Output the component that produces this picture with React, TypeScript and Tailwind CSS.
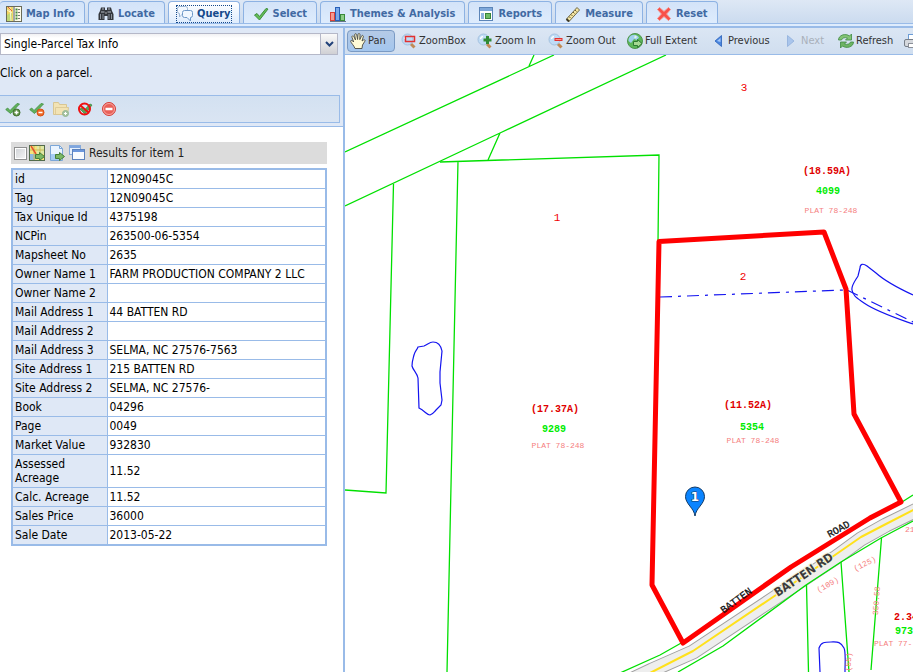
import { useState } from 'react';
import type { ReactNode } from 'react';

const rows = [
  ['id', '12N09045C'],
  ['Tag', '12N09045C'],
  ['Tax Unique Id', '4375198'],
  ['NCPin', '263500-06-5354'],
  ['Mapsheet No', '2635'],
  ['Owner Name 1', 'FARM PRODUCTION COMPANY 2 LLC'],
  ['Owner Name 2', ''],
  ['Mail Address 1', '44 BATTEN RD'],
  ['Mail Address 2', ''],
  ['Mail Address 3', 'SELMA, NC 27576-7563'],
  ['Site Address 1', '215 BATTEN RD'],
  ['Site Address 2', 'SELMA, NC 27576-'],
  ['Book', '04296'],
  ['Page', '0049'],
  ['Market Value', '932830'],
  ['Assessed Acreage', '11.52'],
  ['Calc. Acreage', '11.52'],
  ['Sales Price', '36000'],
  ['Sale Date', '2013-05-22'],
];

const Icon = ({ children }: { children: ReactNode }) => (
  <svg viewBox="0 0 16 16" className="size-4 shrink-0" fill="none" aria-hidden="true">
    {children}
  </svg>
);

const MapInfoIcon = () => (
  <Icon>
    <rect x="0.5" y="0.5" width="15" height="15" fill="#fffbe8" stroke="#6b6b58" />
    <path d="M1 1h6v14H1z" fill="#f3d765" />
    <path d="M1 9l5-3v9H1z" fill="#bfd877" />
    <path d="M1 4l5 3M4 1l1 14" stroke="#fff6c8" />
    <path d="M2 1l4 4" stroke="#e05a3c" />
    <path d="M8 1v14" stroke="#4b5563" />
    <path d="M9.500 3.500h2M9.500 6.500h2M9.500 9.500h2M9.500 12.500h2" stroke="#3f8a3a" strokeWidth="2" />
    <path d="M12 3.500h2M12 6.500h2M12 9.500h2M12 12.500h2" stroke="#777" />
  </Icon>
);

const BinocularsIcon = () => (
  <Icon>
    <path d="M3 1.500h4V4h2V1.500h4L14 5l1.500 3v6H9.500v-4h-3v4H.5V8L2 5z" fill="#33373c" />
    <path d="M4 3h2M10 3h2M3 6h3.500M9.500 6H13" stroke="#b8bec6" />
    <path d="M2.500 8v5M5 8v5M11 8v5M13.500 8v5" stroke="#8b929b" />
    <path d="M7 7h2" stroke="#aaa" />
  </Icon>
);

const ChatIcon = () => (
  <Icon>
    <path d="M2.500.5h6a2 2 0 0 1 2 2v3a2 2 0 0 1-2 2H6l-3.500 3.500V7.500a2 2 0 0 1-2-2v-3a2 2 0 0 1 2-2z" fill="#f2f8ff" stroke="#9fb9d6" />
    <path d="M7.500 4.500h6a2 2 0 0 1 2 2v3a2 2 0 0 1-2 2v3.500L10 11.500H7.500a2 2 0 0 1-2-2v-3a2 2 0 0 1 2-2z" fill="#f0f7ff" stroke="#6d98c8" />
  </Icon>
);

const CheckIcon = () => (
  <Icon>
    <path d="M1.500 9L4 7.500l2.500 3L13 2.500l2 .5-8.500 11z" fill="#63bd57" stroke="#3f8f3c" strokeLinejoin="round" />
  </Icon>
);

const ChartIcon = () => (
  <Icon>
    <rect x="0.500" y="6.500" width="4" height="8" fill="#f59a92" stroke="#dc4238" />
    <rect x="5.500" y="1.500" width="4" height="13" fill="#7ba9ea" stroke="#2860b8" />
    <rect x="10.500" y="8.500" width="4" height="6" fill="#8dcf86" stroke="#3a8a3a" />
    <path d="M0 15.500h16" stroke="#66768b" />
  </Icon>
);

const ReportIcon = () => (
  <Icon>
    <rect x="1.500" y="1.500" width="13" height="13" fill="#fff" stroke="#5c85b8" />
    <path d="M2 3.500h12" stroke="#7fa8da" strokeWidth="3" />
    <rect x="3" y="7" width="3" height="6" fill="#90b4de" />
    <rect x="7.500" y="7.500" width="5" height="5" fill="#6fbd66" stroke="#39853a" />
  </Icon>
);

const RulerIcon = () => (
  <Icon>
    <path d="M1.500 13L12 1.500 14.500 4 4 15.500z" fill="#f5e6a2" stroke="#6e6746" />
    <path d="M4 10.500l1.500 1.500M6 8.500L7.500 10M8 6l1.500 1.500M10 4l1.500 1.500" stroke="#6b5f33" />
    <path d="M1.500 13L4 15.500" stroke="#3c3926" strokeWidth="2" />
  </Icon>
);

const ResetIcon = () => (
  <Icon>
    <path d="M1.500 3.500l2-2L8 5.500l4.500-4 2 2-4 4.500 4 4.500-2 2L8 10.500l-4.500 4-2-2 4-4.500z" fill="#f8514a" stroke="#f58b84" />
  </Icon>
);

const HandIcon = () => (
  <Icon>
    <path
      d="M5 15.500C4 12.500 1 10 .7 8.300.5 7 2.300 7 3.700 9L2 4.300c-.5-1.500 1.300-2 1.900-.6L5.500 7 4.700 2c-.2-1.500 1.700-1.800 2-.3L7.600 6.500 8 1.500c.1-1.400 2-1.300 2 .1l-.2 5L11.500 3c.6-1.200 2.200-.6 1.800.8L12 8l1.500-1c1-.7 2 .2 1.400 1.200L12.500 12l-.5 3.500z"
      fill="#fffbd6"
      stroke="#4c4b3f"
      strokeWidth="0.900"
    />
  </Icon>
);

const Lens = () => (
  <>
    <path d="M9.500 10.500l4 4" stroke="#c08a55" strokeWidth="3" />
    <circle cx="6.500" cy="6.500" r="5.500" fill="#bfdcf6" stroke="#a3c0de" />
    <path d="M3.500 6a3 3 0 0 1 2.500-2.500" stroke="#fff" strokeWidth="1.500" />
  </>
);

const ZoomBoxIcon = () => (
  <Icon>
    <Lens />
    <rect x="4.500" y="3.500" width="9" height="5" stroke="#e23131" strokeWidth="1.500" />
  </Icon>
);

const ZoomInIcon = () => (
  <Icon>
    <Lens />
    <path d="M10.500 3v8M6.500 7h8" stroke="#2f8a35" strokeWidth="3" />
  </Icon>
);

const ZoomOutIcon = () => (
  <Icon>
    <Lens />
    <path d="M6.500 6.500h8" stroke="#e23131" strokeWidth="3" />
    <path d="M7.500 6.500h6" stroke="#ff9a8c" />
  </Icon>
);

const GlobeIcon = () => (
  <Icon>
    <circle cx="8" cy="8" r="7.500" fill="#5db75a" stroke="#4d944d" />
    <path d="M4 2.500c4-2 7 0 8 2L10 7 7 6 4 10 1.500 8C1.300 5.500 2.500 3.500 4 2.500z" fill="#9fd0ee" />
    <path d="M8 2.500l2 1-1 2-2-1z" fill="#e4f5e0" />
    <path d="M6.500 8.500h4v-2l4.500 4-4.500 4v-2h-4z" fill="#a5d993" stroke="#2f7a34" />
  </Icon>
);

const PrevIcon = () => (
  <Icon>
    <path d="M11.500 2.500v11L5 8z" fill="#4a86e0" stroke="#285fb8" strokeWidth="0.800" />
    <path d="M10.500 5v4L7 8z" fill="#a7c9f7" />
  </Icon>
);

const NextIcon = () => (
  <Icon>
    <path d="M4.500 2.500v11L11 8z" fill="#a9c5ec" stroke="#8fafdb" strokeWidth="0.800" />
  </Icon>
);

const RefreshIcon = () => (
  <Icon>
    <path d="M.5 7c0-5 7-7 11-4l2-2v6H7.500l2-2C7 4 4 5 3.500 7z" fill="#83c474" stroke="#3f8a42" strokeWidth="0.800" />
    <path d="M15.500 9c0 5-7 7-11 4l-2 2V9h6l-2 2c2.500 1 5.500 0 6-2z" fill="#6db463" stroke="#3f8a42" strokeWidth="0.800" />
  </Icon>
);

const PrinterIcon = () => (
  <Icon>
    <rect x="4.500" y="1.500" width="8" height="6" fill="#fff" stroke="#6b9cd6" />
    <rect x="0.500" y="6.500" width="15" height="7" rx="1.500" fill="#d5d8dd" stroke="#777e88" />
    <rect x="4.500" y="10.500" width="7" height="4" fill="#fff" stroke="#8a8f98" />
  </Icon>
);

const SmallCheck = () => (
  <path d="M.7 8.500l2-1.500 2.300 2.500 7-7 2.500.5L5.500 12.500z" fill="#63b15b" stroke="#3f8f43" strokeWidth="0.800" />
);

const CheckAddIcon = () => (
  <Icon>
    <SmallCheck />
    <circle cx="11.500" cy="11.500" r="3.500" fill="#5f9149" stroke="#44722f" />
    <path d="M11.500 9.500v4M9.500 11.500h4" stroke="#fff" strokeWidth="1.500" />
  </Icon>
);

const CheckRemoveIcon = () => (
  <Icon>
    <SmallCheck />
    <circle cx="11.500" cy="11.500" r="3.500" fill="#ef6a27" stroke="#d94f12" />
    <path d="M9.500 11.500h4" stroke="#fff" strokeWidth="1.500" />
  </Icon>
);

const FolderAddIcon = () => (
  <Icon>
    <path d="M.5 13.500v-12h5l1 2h7v3h2l-1 7z" fill="#f2e3b4" stroke="#d9c692" />
    <path d="M2.500 13V6.500h12" stroke="#dfcc99" />
    <circle cx="12.500" cy="12.500" r="3" fill="#a6c3a2" stroke="#94b693" />
    <path d="M12.500 11v3M11 12.500h3" stroke="#fff" />
  </Icon>
);

const ClearIcon = () => (
  <Icon>
    <path d="M3 8l2-1 2 2.500L13 3l2 1-7 9z" fill="#5aa855" stroke="#3f8a42" strokeWidth="0.800" />
    <circle cx="7.500" cy="8" r="5.500" stroke="#ee1111" strokeWidth="2" />
    <path d="M3.500 4.500l8 7" stroke="#ee1111" strokeWidth="2" />
  </Icon>
);

const DeleteIcon = () => (
  <Icon>
    <circle cx="8" cy="8" r="6.500" fill="#ea6058" stroke="#d53e38" />
    <circle cx="8" cy="8" r="5.500" stroke="#f6a7a0" />
    <path d="M4.500 8h7" stroke="#fff" strokeWidth="2.500" />
  </Icon>
);

const GoArrow = () => (
  <path d="M6.500 9.500h4v-2l5 4-5 4v-2h-4z" fill="#7cb866" stroke="#447f38" />
);

const ZoomToIcon = () => (
  <Icon>
    <rect x="0.500" y="0.500" width="15" height="15" fill="#f4e37d" stroke="#536b4c" />
    <path d="M8 1h7v8H8z" fill="#dfe8a4" />
    <path d="M1 9h5v6H1z" fill="#8fb7df" />
    <path d="M1 5h14M5 1v14M11 1v14" stroke="#c9bb58" />
    <path d="M2 1l5 8" stroke="#e6502f" strokeWidth="1.500" />
    <GoArrow />
  </Icon>
);

const PageGoIcon = () => (
  <Icon>
    <path d="M1.500.5h9l3 3v12h-12z" fill="#eaf4ff" stroke="#7ba6d8" />
    <path d="M2 9h8v6H2z" fill="#a6ccf3" />
    <path d="M10.500.5v3h3" stroke="#7ba6d8" />
    <GoArrow />
  </Icon>
);

const WindowsIcon = () => (
  <Icon>
    <rect x="0.500" y="0.500" width="11" height="9" fill="#e6f0fc" stroke="#86aadb" />
    <path d="M1 2h10" stroke="#7fa6df" strokeWidth="2" />
    <rect x="3.500" y="4.500" width="12" height="10" fill="#f8fbff" stroke="#5d83bd" />
    <path d="M4 6h11" stroke="#6c97dc" strokeWidth="2" />
  </Icon>
);

const tabs = [
  { label: 'Map Info', icon: <MapInfoIcon />, pad: 'pr-[9px] pl-1.5' },
  { label: 'Locate', icon: <BinocularsIcon />, pad: 'px-[9px]' },
  { label: 'Query', icon: <ChatIcon />, pad: 'px-2' },
  { label: 'Select', icon: <CheckIcon />, pad: 'px-[9px]' },
  { label: 'Themes & Analysis', icon: <ChartIcon />, pad: 'px-[9px]' },
  { label: 'Reports', icon: <ReportIcon />, pad: 'px-[9px]' },
  { label: 'Measure', icon: <RulerIcon />, pad: 'px-[9px]' },
  { label: 'Reset', icon: <ResetIcon />, pad: 'px-[9px]' },
];

const mapTools = [
  { label: 'Pan', icon: <HandIcon />, width: 'w-12' },
  { label: 'ZoomBox', icon: <ZoomBoxIcon />, width: 'w-[73px]' },
  { label: 'Zoom In', icon: <ZoomInIcon />, width: 'w-[68px]' },
  { label: 'Zoom Out', icon: <ZoomOutIcon />, width: 'w-[76px]' },
  { label: 'Full Extent', icon: <GlobeIcon />, width: 'w-[80px]' },
  { label: 'Previous', icon: <PrevIcon />, width: 'w-[70px]' },
  { label: 'Next', icon: <NextIcon />, width: 'w-[52px]' },
  { label: 'Refresh', icon: <RefreshIcon />, width: 'w-[66px]' },
];

const selectionTools = [
  { label: 'Add to selection', icon: <CheckAddIcon /> },
  { label: 'Remove from selection', icon: <CheckRemoveIcon /> },
  { label: 'Add folder', icon: <FolderAddIcon /> },
  { label: 'Clear selection', icon: <ClearIcon /> },
  { label: 'Delete', icon: <DeleteIcon /> },
];

const ParcelMap = () => (
  <svg
    viewBox="345 55 568 617"
    preserveAspectRatio="xMinYMin slice"
    className="block h-full w-full"
    fill="none"
    role="img"
    aria-label="Parcel map"
  >
    {/* road */}
    <g strokeLinejoin="round">
      <path d="M610 690L652 670 693 652 773 599 835 558 861 539 886 525 925 506" stroke="#a0a0a0" strokeWidth="15" />
      <path d="M610 690L652 670 693 652 773 599 835 558 861 539 886 525 925 506" stroke="#eeeeee" strokeWidth="13" />
      <path d="M610 693L652 672 693 651 773 597 835 555 861 537 886 524 925 504" stroke="#ffe11a" strokeWidth="2" />
    </g>

    {/* parcel lines */}
    <g stroke="#00e000" strokeWidth="1.300">
      <path d="M345 152L554 55M529 66l5-11M345 206L500 133 666 55M500 133l-12 27" />
      <path d="M440 162L659 155 658 242M458 161L447 672M393.500 184L386 493 345 490" />
      <path d="M620 673L660 655 683 642M902 502L913 495" />
      <path d="M678 672L723 646 806 585 841 562 881 538 913 521" />
      <path d="M806.500 585L808.500 672M841 562L849 672M881.500 538L871 670" />
    </g>

    {/* water */}
    <g stroke="#1414f0" strokeWidth="1.200">
      <path d="M418 347l6-1c4-2 6-4 9-4 5 0 8 4 9 9l-2 21 0 11 2 17-1 5-5 5c-2 2-3 4-6 5-3 0-5-4-11-7l-1-30c-1-5-5-8-6-12 0-5 1-7 2-11 1-4 3-5 4-8z" />
      <path d="M913 295c-15-7-27-13-37-22l-9-7c-4-3-7-2-7 2l-2 8c-3 5-7 10-6 14 1 6 5 8 12 13 13 9 32 15 49 21" />
      <path d="M820 672l-1-24c2-6 6-6 12-6 6 0 9-1 13 6 2 4 1 14 1 24" />
      <path d="M660 297L845 290" strokeDasharray="12 6 3 6" />
      <path d="M847 290L913 322" strokeDasharray="12 6 3 6" />
    </g>

    <path d="M659 241.500L824 232 846 289 854 414 901 502 870 518 791 567 683 643 652 585z" stroke="#ff0000" strokeWidth="5" strokeLinejoin="round" />

    {/* labels */}
    <g className="font-['Liberation_Mono',monospace]" textAnchor="middle">
      <g fill="#f00000" className="text-[11px]">
        <text x="744" y="91">3</text>
        <text x="557" y="221">1</text>
        <text x="743" y="280">2</text>
      </g>
      <g fill="#e00000" className="text-[10px] font-bold">
        <text x="827" y="174">(18.59A)</text>
        <text x="555" y="412">(17.37A)</text>
        <text x="748" y="408">(11.52A)</text>
        <text x="894" y="620" textAnchor="start">2.34</text>
      </g>
      <g fill="#00ec00" className="text-[10px] font-bold">
        <text x="828" y="194">4099</text>
        <text x="554" y="432">9289</text>
        <text x="752" y="430">5354</text>
        <text x="895" y="634" textAnchor="start">9735</text>
      </g>
      <g fill="#f58080" className="text-[8px]">
        <text x="831" y="213">PLAT 78-248</text>
        <text x="558" y="448">PLAT 78-248</text>
        <text x="753" y="443">PLAT 78-248</text>
        <text x="874" y="646" textAnchor="start">PLAT 77-</text>
        <text x="905" y="532" textAnchor="start">21</text>
      </g>
      <g fill="#f58080" className="text-[8px]">
        <text transform="translate(829 587) rotate(-30)">(109)</text>
        <text transform="translate(866 566) rotate(-27)">(125)</text>
        <text transform="translate(879 601) rotate(-86)">350.58</text>
        <text transform="translate(851 662) rotate(-88)">(55)</text>
      </g>
      <g fill="#111111" className="text-[10px]" stroke="#111111" strokeWidth="0.300">
        <text transform="translate(738 603) rotate(-36)">BATTEN</text>
        <text transform="translate(840 532) rotate(-29)">ROAD</text>
      </g>
    </g>
    <text
      transform="translate(806 578) rotate(-34)"
      textAnchor="middle"
      className="font-['DejaVu_Sans_Condensed',sans-serif] text-[12px] font-bold"
      fill="#3c3c3c"
      stroke="#f4f2dc"
      strokeWidth="2"
      paintOrder="stroke"
    >
      BATTEN RD
    </text>

    {/* marker */}
    <path d="M695 516c-1-8-9.500-12-9.500-19.500a9.500 9.500 0 0 1 19 0C704.500 504 696 508 695 516z" fill="#0a84ff" stroke="#123a66" />
    <text x="695" y="501" textAnchor="middle" className="font-['DejaVu_Sans',sans-serif] text-[12px] font-bold" fill="#ffffff" stroke="#143a66" strokeWidth="1" paintOrder="stroke">
      1
    </text>
  </svg>
);

export default function App() {
  const [activeTab, setActiveTab] = useState('Query');
  const [tool, setTool] = useState('Pan');

  return (
    <div className="flex h-screen flex-col overflow-hidden bg-[#dfe8f6] font-['DejaVu_Sans_Condensed','Noto_Sans',sans-serif] text-[12px] leading-[14px] text-black">
      <nav className="flex shrink-0 items-end gap-[3px] overflow-hidden border-b border-[#99bbe8] bg-linear-to-b from-[#dee8f5] to-[#cbdbef] pt-px whitespace-nowrap">
        {tabs.map((tab) => (
          <button
            key={tab.label}
            type="button"
            onClick={() => setActiveTab(tab.label)}
            className={`flex h-[22px] items-center rounded-t border border-b-0 border-[#8db2e3] bg-linear-to-b pt-0.5 text-[11px] font-bold first:border-l-0 ${tab.pad} ${
              activeTab === tab.label
                ? 'from-white to-[#deecfd] text-[#15498b]'
                : 'from-[#d3e3f8] to-[#deecfd] text-[#416aa3]'
            }`}
          >
            <span className={`flex items-center gap-1 ${activeTab === tab.label ? 'outline-1 outline-[#15498b] outline-dotted' : ''}`}>
              {tab.icon}
              {tab.label}
            </span>
          </button>
        ))}
      </nav>
      <div className="h-1 shrink-0 border-b-2 border-[#99bbe8] bg-[#deecfd]" />

      <div className="flex min-h-0 flex-1">
        <aside className="flex w-[345px] shrink-0 flex-col border-r-2 border-[#99bbe8]">
          <div className="border-b border-[#99bbe8] pt-[5px] pr-[3px] pb-[3px]">
            <div className="relative mr-0.5 flex h-[22px]">
              <select
                aria-label="Query type"
                className="w-full appearance-none border border-[#b5b8c8] bg-linear-to-b from-[#f1f1f3] to-white to-20% pr-5 pl-[3px] outline-none"
              >
                <option>Single-Parcel Tax Info</option>
              </select>
              <span className="pointer-events-none absolute inset-y-0 right-0 flex w-[18px] items-center justify-center border border-[#b5b8c8] bg-linear-to-b from-[#fafafa] to-[#d0d0d4]">
                <svg viewBox="0 0 9 6" className="w-[9px]" fill="none" aria-hidden="true">
                  <path d="M1 1l3.500 3.500L8 1" stroke="#22427a" strokeWidth="2" />
                </svg>
              </span>
            </div>
            <p className="pt-[11px] pb-[15px]">Click on a parcel.</p>
            <div className="flex h-7 items-center gap-2 border border-l-0 border-[#99bbe8] bg-linear-to-b from-[#d3e1f1] to-[#dae5f3] pl-[5px]">
              {selectionTools.map((item) => (
                <button key={item.label} type="button" aria-label={item.label}>
                  {item.icon}
                </button>
              ))}
            </div>
          </div>

          <div className="min-h-0 flex-1 overflow-hidden bg-white pt-[15px] pr-4 pl-[11px]">
            <div className="flex h-[22px] items-center gap-1 bg-[#dcdcdc] pl-[3px] text-[#222]">
              <input
                type="checkbox"
                aria-label="Select item 1"
                className="-mr-0.5 size-[13px] appearance-none border border-[#8e8f8f] bg-linear-to-br from-[#cfd2d6] to-[#f6f6f6] ring-1 ring-white ring-inset checked:bg-[#4b6ea8]"
              />
              <button type="button" aria-label="Zoom to item"><ZoomToIcon /></button>
              <button type="button" aria-label="Export item"><PageGoIcon /></button>
              <button type="button" aria-label="Open item in window"><WindowsIcon /></button>
              <span>Results for item 1</span>
            </div>
            <table className="mt-1 w-full table-fixed border-collapse border-2 border-[#99bbe8]">
              <tbody>
                {rows.map(([label, value]) => (
                  <tr key={label} className="h-[19px]">
                    <th className="w-[95px] border border-[#99bbe8] bg-[#dfe8f6] px-0.5 py-0.5 text-left font-normal">
                      {label}
                    </th>
                    <td className="border border-[#99bbe8] px-0.5 py-0.5">{value}</td>
                  </tr>
                ))}
              </tbody>
            </table>
          </div>
        </aside>

        <main className="flex min-w-0 flex-1 flex-col">
          <div className="flex h-[27px] shrink-0 items-center gap-[3px] overflow-hidden border-b border-[#99bbe8] bg-linear-to-b from-[#dbe6f4] to-[#d0deef] pl-0.5 text-[11px] whitespace-nowrap text-[#333]">
            {mapTools.map((item) => (
              <button
                key={item.label}
                type="button"
                disabled={item.label === 'Next'}
                onClick={() => setTool(item.label)}
                className={`flex h-[22px] shrink-0 items-center gap-0.5 rounded-sm border px-0.5 disabled:text-[#a9b0ba] ${item.width} ${
                  tool === item.label
                    ? 'border-[#7a9ac4] bg-linear-to-b from-[#b5cae6] to-[#a3c6ee]'
                    : 'border-transparent'
                }`}
              >
                {item.icon}
                {item.label}
              </button>
            ))}
            <button type="button" aria-label="Print" className="shrink-0">
              <PrinterIcon />
            </button>
          </div>
          <div className="min-h-0 flex-1 overflow-hidden bg-white">
            <ParcelMap />
          </div>
        </main>
      </div>
    </div>
  );
}
